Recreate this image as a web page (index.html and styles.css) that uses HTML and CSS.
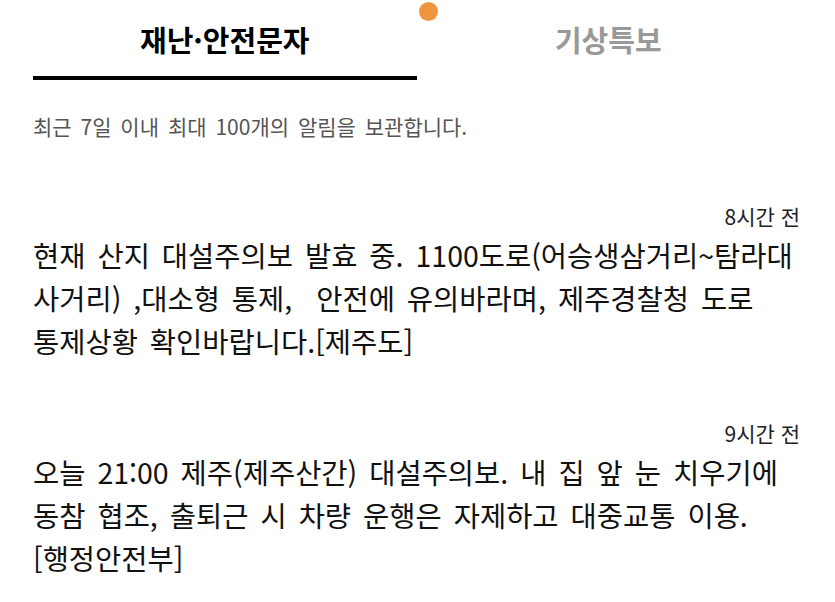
FILE: index.html
```html
<!DOCTYPE html>
<html lang="ko">

<head>
    <meta charset="UTF-8">
    <meta name="viewport" content="width=device-width, initial-scale=1.0">
    <title>재난·안전문자</title>
    <link rel="stylesheet" href="styles.css">
</head>

<body>
    <div class="tabs">
        <div class="tab active">재난·안전문자</div>
        <div class="tab">
            <span class="new-dot"></span>
            기상특보
        </div>
    </div>

    <p class="notice">최근 7일 이내 최대 100개의 알림을 보관합니다.</p>

    <ul class="message-list">
        <li class="message">
            <div class="time">8시간 전</div>
            <div class="text">현재 산지 대설주의보 발효 중. 1100도로(어승생삼거리~탐라대<wbr>사거리) ,대소형 통제,&nbsp; 안전에 유의바라며, 제주경찰청 도로 통제상황 확인바랍니다.[제주도]</div>
        </li>
        <li class="message">
            <div class="time">9시간 전</div>
            <div class="text">오늘 21:00 제주(제주산간) 대설주의보. 내 집 앞 눈 치우기에 동참 협조, 출퇴근 시 차량 운행은 자제하고 대중교통 이용. [행정안전부]</div>
        </li>
    </ul>
</body>

</html>
```

FILE: styles.css
```css
body {
    margin: 0;
    background-color: #fff;
    color: #111;
    font-family: "Noto Sans CJK KR", "Noto Sans", sans-serif;
    padding: 0 35px 0 33px;
}

.tabs {
    display: flex;
    height: 80px;
}

.tab {
    flex: 1;
    position: relative;
    display: flex;
    justify-content: center;
    padding-top: 17px;
    font-size: 29px;
    line-height: 44px;
    font-weight: 700;
    color: #999;
    box-sizing: border-box;
}

.tab.active {
    color: #000;
    border-bottom: 4px solid #000;
}

/* orange "new" marker over the second tab */
.new-dot {
    position: absolute;
    left: 2px;
    top: 2px;
    width: 19px;
    height: 19px;
    border-radius: 50%;
    background-color: #f0953f;
}

.notice {
    margin: 31px 0 0;
    font-size: 21px;
    line-height: 30px;
    word-spacing: 3px;
    color: #555;
}

.message-list {
    list-style: none;
    margin: 0;
    padding: 0;
}

.message {
    margin-top: 60px;
}

.message + .message {
    margin-top: 56px;
}

.time {
    text-align: right;
    font-size: 21px;
    line-height: 30px;
    margin-bottom: 2px;
    color: #222;
}

/* korean words stay whole when wrapping */
.text {
    font-size: 28.5px;
    line-height: 43px;
    word-spacing: 4px;
    word-break: keep-all;
    color: #111;
}
```
